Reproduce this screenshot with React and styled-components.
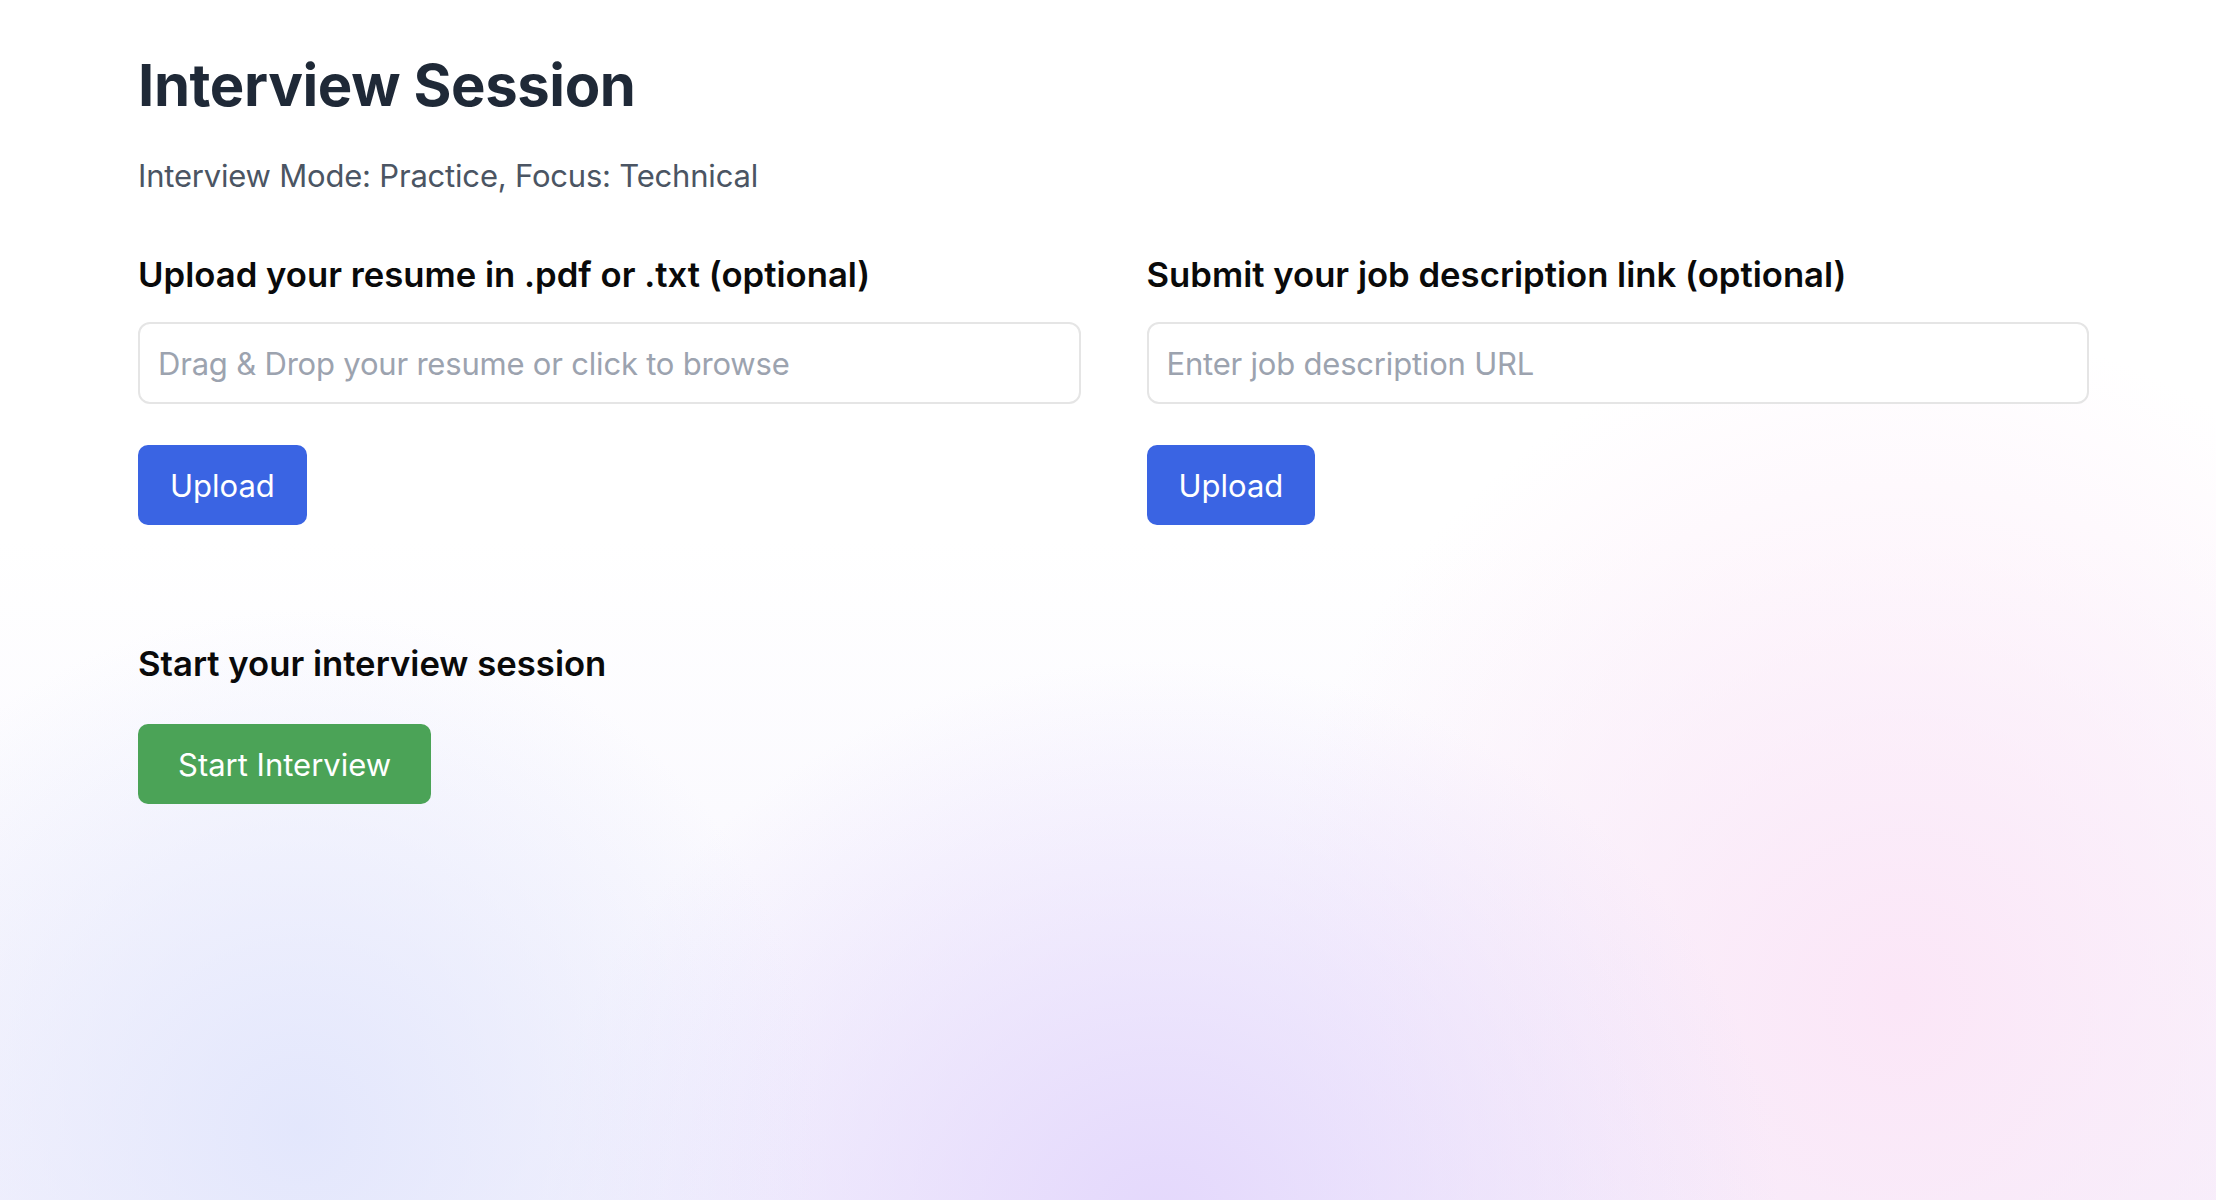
import styled, { createGlobalStyle } from 'styled-components';

const GlobalStyle = createGlobalStyle`
  html, body {
    margin: 0;
    padding: 0;
  }
  body {
    min-height: 100vh;
    font-family: Inter, "Noto Sans", "Liberation Sans", sans-serif;
    background-color: #ffffff;
    background-image:
      radial-gradient(ellipse 520px 520px at 300px 1130px, rgba(226, 230, 252, 0.95), rgba(226, 230, 252, 0) 100%),
      radial-gradient(ellipse 620px 560px at 1160px 1220px, rgba(228, 216, 252, 1), rgba(228, 216, 252, 0) 100%),
      radial-gradient(ellipse 640px 680px at 1900px 1000px, rgba(251, 230, 247, 1), rgba(251, 230, 247, 0) 100%),
      linear-gradient(180deg, #ffffff 0%, #ffffff 45%, #f5f3fd 100%);
    background-repeat: no-repeat;
  }
  * {
    box-sizing: border-box;
  }
`;

const Page = styled.div`
  min-height: 100vh;
  padding: 49px 127px 48px 138px;
`;

const Title = styled.h1`
  margin: 0;
  font-size: 58px;
  line-height: 72px;
  font-weight: 700;
  color: #1f2937;
  letter-spacing: -0.4px;
`;

const Subtitle = styled.p`
  margin: 31px 0 0;
  font-size: 31px;
  line-height: 48px;
  color: #4b5563;
  letter-spacing: -0.2px;
`;

const Columns = styled.div`
  display: grid;
  grid-template-columns: 1fr 1fr;
  column-gap: 66px;
  margin-top: 50px;
`;

const Column = styled.section`
  display: flex;
  flex-direction: column;
  align-items: flex-start;
`;

const SectionTitle = styled.h2`
  margin: 0;
  font-size: 34.7px;
  line-height: 48px;
  font-weight: 600;
  color: #0a0a0a;
`;

const Field = styled.input`
  width: 100%;
  height: 82px;
  margin-top: 24px;
  padding: 0 18px;
  border: 2px solid #e5e5e5;
  border-radius: 12px;
  background: #ffffff;
  font-family: inherit;
  font-size: 31px;
  letter-spacing: -0.2px;
  color: #111827;
  outline: none;

  &::placeholder {
    color: #9ca3af;
  }
`;

const Button = styled.button`
  margin-top: ${(p) => p.$gap || 0}px;
  padding: 0 ${(p) => p.$padX || 32}px;
  height: 80px;
  border: none;
  border-radius: 10px;
  background: ${(p) => p.$color};
  color: #ffffff;
  font-family: inherit;
  font-size: 31px;
  font-weight: 400;
  cursor: pointer;
`;

const StartSection = styled.section`
  display: flex;
  flex-direction: column;
  align-items: flex-start;
  margin-top: 114px;
`;

const App = () => (
  <>
    <GlobalStyle />
    <Page>
      <Title>Interview Session</Title>
      <Subtitle>Interview Mode: Practice, Focus: Technical</Subtitle>

      <Columns>
        <Column>
          <SectionTitle>Upload your resume in .pdf or .txt (optional)</SectionTitle>
          <Field placeholder="Drag & Drop your resume or click to browse" readOnly />
          <Button $color="#3a64e3" $gap={41} $padX={32}>Upload</Button>
        </Column>
        <Column>
          <SectionTitle>Submit your job description link (optional)</SectionTitle>
          <Field placeholder="Enter job description URL" />
          <Button $color="#3a64e3" $gap={41} $padX={32}>Upload</Button>
        </Column>
      </Columns>

      <StartSection>
        <SectionTitle>Start your interview session</SectionTitle>
        <Button $color="#4ba357" $gap={37} $padX={40}>Start Interview</Button>
      </StartSection>
    </Page>
  </>
);

export default App;
